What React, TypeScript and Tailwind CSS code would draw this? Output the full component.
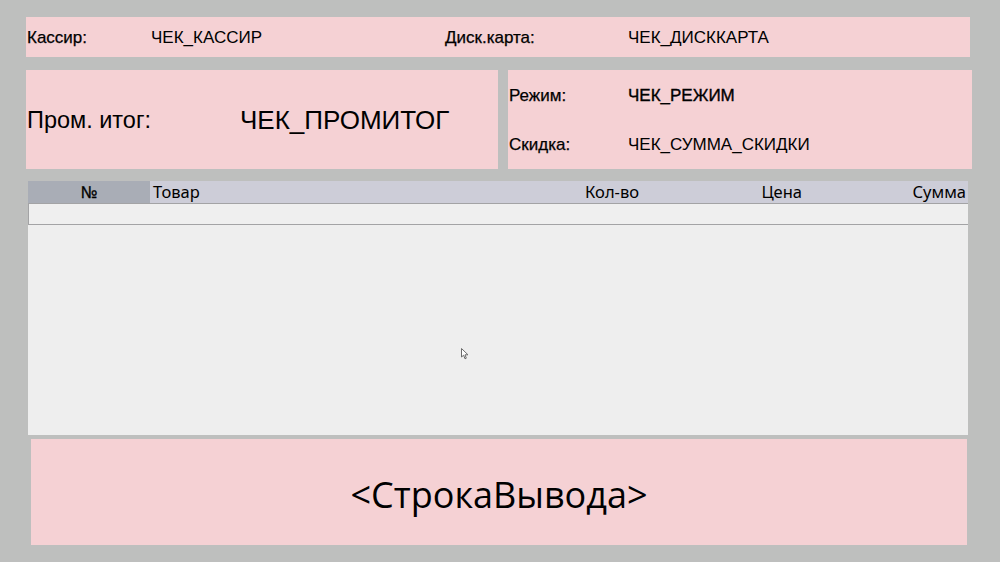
import React from 'react';

const columns = [
  { label: 'Кол-во', width: 'w-[163px]' },
  { label: 'Цена', width: 'w-[163px]' },
  { label: 'Сумма', width: 'w-[164px]' },
];

const App: React.FC = () => {
  return (
    <div className="relative h-[562px] w-[1000px] overflow-hidden bg-[#bebfbe] pt-[17px] font-['Liberation_Sans',Arial,sans-serif] text-black">
      {/* шапка: кассир / карта */}
      <div className="ml-[26px] flex h-[40px] w-[944px] items-center bg-[#f5d1d4] pt-[2px] text-[17px]">
        <span className="w-[125px] pl-[1px] [-webkit-text-stroke:0.25px_black]">Кассир:</span>
        <span className="w-[294px]">ЧЕК_КАССИР</span>
        <span className="w-[183px] [-webkit-text-stroke:0.25px_black]">Диск.карта:</span>
        <span>ЧЕК_ДИСККАРТА</span>
      </div>

      <div className="ml-[26px] mt-[13px] flex h-[99px] gap-[10px]">
        <div className="flex w-[472px] items-center bg-[#f5d1d4] pt-[2px]">
          <span className="w-[214px] pl-[1px] text-[23.5px]">Пром. итог:</span>
          <span className="text-[26px]">ЧЕК_ПРОМИТОГ</span>
        </div>
        <div className="flex w-[464px] flex-col justify-center gap-[23px] bg-[#f5d1d4] pt-[1px] text-[17px]">
          <div className="flex">
            <span className="w-[120px] pl-[1px] [-webkit-text-stroke:0.25px_black]">Режим:</span>
            <span className="[-webkit-text-stroke:0.35px_black]">ЧЕК_РЕЖИМ</span>
          </div>
          <div className="flex">
            <span className="w-[120px] pl-[1px] [-webkit-text-stroke:0.25px_black]">Скидка:</span>
            <span>ЧЕК_СУММА_СКИДКИ</span>
          </div>
        </div>
      </div>

      {/* таблица товаров */}
      <div className="ml-[28px] mt-[12px] w-[940px] font-['Noto_Sans',sans-serif] text-[16.5px]">
        <div className="flex h-[22px] items-center bg-[#cdcdd8] leading-none">
          <div className="flex h-full w-[122px] items-center justify-center bg-[#a9adb6] [-webkit-text-stroke:0.3px_black]">№</div>
          <div className="flex-1 pl-[3px]">Товар</div>
          {columns.map((c) => (
            <div key={c.label} className={`${c.width} pr-[2px] text-right`}>
              {c.label}
            </div>
          ))}
        </div>
        <div className="h-[22px] border-y border-l border-[#a3a3a5] bg-[#efefef]" />
        <div className="h-[210px] bg-[#eeeeee]" />
      </div>

      <div className="ml-[31px] mt-[4px] flex h-[106px] w-[936px] items-center justify-center bg-[#f5d1d4] pt-[5px] font-['Open_Sans',sans-serif] text-[36px]">
        &lt;СтрокаВывода&gt;
      </div>

      {/* курсор */}
      <svg className="absolute left-[461px] top-[348px]" width="8" height="12" viewBox="0 0 8 12">
        <path d="M0.5 0.5 L0.5 9 L2.6 7.2 L4 10.8 L5.3 10.2 L4 6.8 L7 6.8 Z" fill="#fff" stroke="#6b6b6b" strokeWidth="1" />
      </svg>
    </div>
  );
};

export default App;
